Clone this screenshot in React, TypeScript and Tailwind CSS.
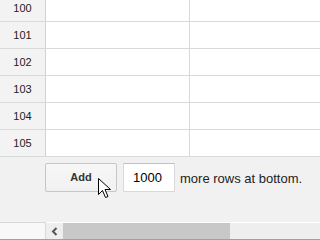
import React from 'react';

const rows = [100, 101, 102, 103, 104, 105];

// Standard arrow pointer
function Pointer() {
  return (
    <svg className="absolute left-[98px] top-[178px]" width="13" height="21" viewBox="0 0 13 21">
      <path
        d="M0.5 0.5 L0.5 16.5 L4.5 12.5 L7.5 19.5 L10 18.5 L7 11.5 L12.5 11.5 Z"
        fill="#ffffff"
        stroke="#000000"
        strokeWidth="1"
        strokeLinejoin="miter"
      />
    </svg>
  );
}

export default function App() {
  return (
    <div
      className="relative w-[320px] h-[240px] overflow-hidden bg-[#f1f1f1]"
      style={{ fontFamily: '"Liberation Sans", Arial, sans-serif' }}
    >
      {/* Sheet grid */}
      <div className="-mt-[5px] bg-white">
        {rows.map((n) => (
          <div key={n} className="flex h-[27px] border-b border-[#d9d9d9]">
            <div className="w-[46px] shrink-0 bg-[#f3f3f3] border-r border-[#d0d0d0] flex items-center justify-center text-[11px] text-[#222]">
              {n}
            </div>
            <div className="w-[144px] shrink-0 border-r border-[#d9d9d9]" />
            <div className="flex-1" />
          </div>
        ))}
      </div>

      {/* Add rows bar */}
      <div className="h-[65px] pt-[6px] pl-[45px] flex items-start">
        <button className="w-[72px] h-[29px] rounded-[2px] border border-[#c6c6c6] bg-gradient-to-b from-[#f7f7f7] to-[#f1f1f1] text-[11px] font-bold text-[#333]">
          Add
        </button>
        <div className="ml-[6px] w-[52px] h-[29px] border border-[#d9d9d9] border-t-[#c0c0c0] bg-white flex items-center pl-[9px] text-[13px] text-black">
          1000
        </div>
        <span className="ml-[5px] h-[29px] flex items-center pt-[2px] text-[13px] text-[#222]">more rows at bottom.</span>
      </div>

      {/* Horizontal scrollbar */}
      <div className="h-[18px] flex border-b border-[#a0a0a0]">
        <div className="w-[46px] shrink-0 bg-[#f8f8f8] border-t border-r border-[#d9d9d9]" />
        <div className="flex-1 flex border-t border-white bg-[#eeeeee]">
          <div className="w-[17px] flex items-center justify-center">
            <svg width="7" height="9" viewBox="0 0 7 9">
              <path d="M5.5 1 L2 4.5 L5.5 8" stroke="#555" strokeWidth="2" fill="none" />
            </svg>
          </div>
          <div className="w-[167px] bg-[#c8c8c8]" />
        </div>
      </div>

      <Pointer />
    </div>
  );
}
